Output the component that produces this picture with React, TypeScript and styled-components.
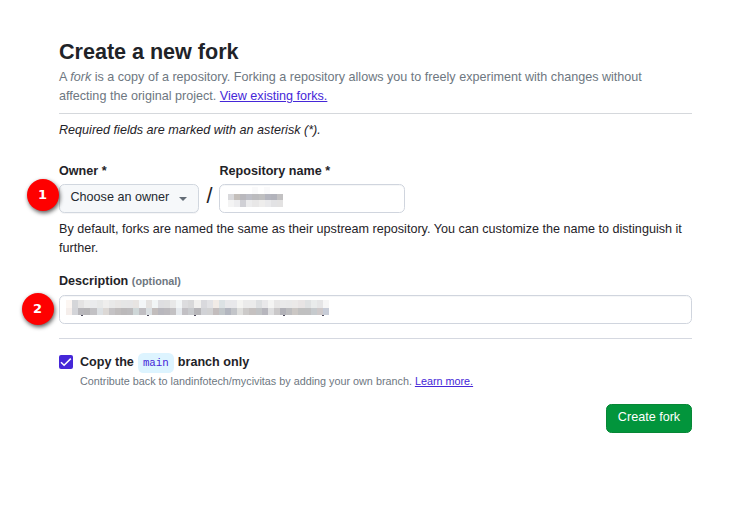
import React from "react";
import styled, { createGlobalStyle } from "styled-components";

const GlobalStyle = createGlobalStyle`
  *, *::before, *::after { box-sizing: border-box; }
  body {
    margin: 0;
    background: #fff;
    color: #1f2328;
    font: 12.6px/19px "Liberation Sans", Arial, sans-serif;
  }
`;

const Page = styled.main`
  width: 633px;
  margin: 36px 0 0 59px;
`;

const Title = styled.h1`
  margin: 0 0 1px;
  font-size: 21.6px;
  line-height: 31px;
  font-weight: 700;
  letter-spacing: -0.03px;
`;

const Lead = styled.p`
  margin: 0;
  padding-bottom: 7px;
  border-bottom: 1px solid #d5d8dc;
  color: #6e7781;
`;

const Link = styled.a`
  color: #4527d8;
  text-decoration: underline;
`;

const Note = styled.p`
  margin: 7px 0 22px;
  font-style: italic;
`;

const NameRow = styled.div`
  display: flex;
  align-items: flex-end;
`;

const Field = styled.div<{ $width?: number }>`
  position: relative;
  display: flex;
  flex-direction: column;
  width: ${(p) => (p.$width ? `${p.$width}px` : "100%")};
`;

const Label = styled.label<{ $inset?: number; $height?: number }>`
  font-weight: 700;
  height: ${(p) => p.$height ?? 22}px;
  padding-left: ${(p) => p.$inset ?? 0}px;
`;

const Optional = styled.span`
  font-size: 10.8px;
  color: #6e7781;
`;

const OwnerButton = styled.button`
  display: flex;
  align-items: center;
  justify-content: space-between;
  height: 29px;
  padding: 0 11px 2px 10.5px;
  border: 1px solid #d1d7df;
  border-radius: 5.4px;
  background: #f6f8fa;
  color: #24292f;
  font: inherit;
  box-shadow: 0 1px 0 rgba(31, 35, 40, 0.04);
`;

const Caret = styled.svg`
  width: 8px;
  height: 4px;
  margin-top: 3px;
  fill: #636c76;
`;

const Slash = styled.span`
  width: 20px;
  height: 29px;
  padding-left: 1px;
  text-align: center;
  font-size: 21.6px;
  line-height: 24px;
`;

const InputBox = styled.div`
  height: 29px;
  border: 1px solid #d0d5de;
  border-radius: 5.4px;
  background: #fff;
  box-shadow: inset 0 1px 0 rgba(208, 215, 222, 0.2);
`;

const Redacted = styled.svg<{ $left: number; $top: number }>`
  display: block;
  margin: ${(p) => `${p.$top}px 0 0 ${p.$left}px`};
`;

const Help = styled.p`
  margin: 7px 0 14px;
`;

const Marker = styled.span<{ $left: number; $top: number }>`
  position: absolute;
  left: ${(p) => p.$left}px;
  top: ${(p) => p.$top}px;
  width: 32px;
  height: 32px;
  border-radius: 50%;
  background: #fe0000;
  color: #fff;
  font: 700 13px/32px "DejaVu Sans", sans-serif;
  text-align: center;
  box-shadow: 1px 2px 4px rgba(0, 0, 0, 0.65);
`;

const Divider = styled.hr`
  margin: 14px 0 0;
  border: 0;
  border-top: 1px solid #d5d8e0;
`;

const BranchOption = styled.div`
  display: grid;
  grid-template-columns: 14px 1fr;
  column-gap: 7px;
  margin-top: 14px;
`;

const CheckBox = styled.span`
  width: 14px;
  height: 14px;
  margin-top: 2px;
  border-radius: 2px;
  background: #4527d8;
`;

const BranchTitle = styled.strong`
  height: 19px;
  line-height: 19px;
`;

const Branch = styled.code`
  display: inline-block;
  height: 20px;
  margin: 0 0.5px;
  padding: 0 5px;
  border-radius: 5.4px;
  background: #ddf4ff;
  color: #4527d8;
  font: 400 10.8px/20px "Liberation Mono", monospace;
  vertical-align: top;
`;

const BranchHelp = styled.span`
  grid-column: 2;
  color: #6e7781;
  font-size: 10.8px;
  line-height: 18px;
`;

const Actions = styled.div`
  display: flex;
  justify-content: flex-end;
  margin-top: 14px;
`;

const Submit = styled.button`
  width: 86px;
  height: 29px;
  padding: 0 0 2px;
  border: 1px solid #078736;
  border-radius: 5.4px;
  background: #02953c;
  color: #fff;
  font: inherit;
`;

const nameRows = [
  "d9d9dc c4bfbb b9b8bd bdbec6 bbbbbe bfbfc0 b4b5be b2b3bb c2c1c2".split(" "),
  "f4f4f4 ededef d0d0d5 ececed e8e7e7 eeedec e9e9eb e2e2e4 e3e2e2".split(" "),
];

const descriptionRows = [
  "fcf6f2 d5d6d9 e4e3e3 ececec eaebed e7e8e8 efeeed e9e9e9 e8e6e5 e5e6e6 e5e5e6 e7e4e2 f3f6f8 e4e2e1 f1f5f6 dedee1 dfdfe0 e8e8e8 f2f5f6 dcdcde d8d8d9 f1f0ee d9d9dd e2e2e5 f1ebe6 dce2e4 e8e8ea e8e8eb f4f4f2 ebebeb ebebeb dddfe1 e9e8ea f4f4f3 e7e6e6 eaeaea e9e9e9 ebe9e8 e8e4e4 dfe1e2 e9ebeb e5e5e6 f6f6f6".split(" "),
  "f5eeeb d3d4d8 b8b7bb b7b6b8 c2c1c4 dce0e3 dcd8d5 c5c3c5 c0bdbd bbb9ba bcbbbd cfd7d8 c0bec2 d9dee1 c2bdbc b8b7bd bbb9bd c3c1c3 e5e9ed c2c0c4 c8cacd b7b6b9 d1d2d6 d2d2d3 c3bdbd c1c6c9 b3b6bf c3c5c9 dfdfdd cccac9 c5c1c0 c1c3c5 b7b6bd dededf cac8c9 b2b2b8 bdbdbf cbc7c4 c0c0c0 c0c0c1 c6cacd cec9ca c7ccd7".split(" "),
];

function Mosaic({ rows, width, left, top, split, height, tails = [], hints = [] }: {
  rows: string[][];
  width: number;
  left: number;
  top: number;
  split: number;
  height: number;
  tails?: number[];
  hints?: number[];
}) {
  const cell = width / rows[0].length;
  const lift = hints.length ? 7 : 0;
  return (
    <Redacted
      $left={left}
      $top={top - lift}
      width={width}
      height={height + lift + 1}
      shapeRendering="crispEdges"
      aria-hidden="true"
    >
      {hints.map((x) => (
        <rect key={x} x={x} y={0} width={6} height={7} fill="#fafafb" />
      ))}
      {rows.map((row, r) =>
        row.map((color, i) => (
          <rect
            key={`${r}-${i}`}
            x={i * cell}
            y={lift + (r ? split : 0)}
            width={cell}
            height={r ? height - split : split}
            fill={`#${color}`}
          />
        ))
      )}
      {tails.map((x) => (
        <rect key={x} x={x} y={height} width={2} height={1} fill="#4e4b5c" />
      ))}
    </Redacted>
  );
}

export default function App() {
  return (
    <>
      <GlobalStyle />
      <Page>
        <Title>Create a new fork</Title>
        <Lead>
          A <em>fork</em> is a copy of a repository. Forking a repository allows you to freely experiment with changes without affecting the original project. <Link>View existing forks.</Link>
        </Lead>
        <Note>Required fields are marked with an asterisk (*).</Note>

        <NameRow>
          <Field $width={140}>
            <Label>Owner *</Label>
            <OwnerButton>
              Choose an owner
              <Caret viewBox="0 0 8 4"><path d="M0 0h8L4 4z" /></Caret>
            </OwnerButton>
            <Marker $left={-32.5} $top={17.4}>1</Marker>
          </Field>
          <Slash>/</Slash>
          <Field $width={186}>
            <Label $inset={0.5}>Repository name *</Label>
            <InputBox>
              <Mosaic rows={nameRows} width={55} left={8} top={9} split={6} height={13} hints={[24, 36]} />
            </InputBox>
          </Field>
        </NameRow>
        <Help>
          By default, forks are named the same as their upstream repository. You can customize the name to distinguish it further.
        </Help>

        <Field>
          <Label $height={23}>Description <Optional>(optional)</Optional></Label>
          <InputBox>
            <Mosaic rows={descriptionRows} width={263} left={6} top={4} split={8} height={15} tails={[15, 81, 128, 217, 256]} />
          </InputBox>
          <Marker $left={-37.5} $top={21.4}>2</Marker>
        </Field>
        <Divider />

        <BranchOption>
          <CheckBox role="checkbox" aria-checked="true">
            <svg width="14" height="14" viewBox="0 0 14 14" display="block">
              <path d="M2 7.3 5.1 10.3 11.8 3.6" fill="none" stroke="#fff" strokeWidth="1.5" />
            </svg>
          </CheckBox>
          <BranchTitle>Copy the <Branch>main</Branch> branch only</BranchTitle>
          <BranchHelp>
            Contribute back to landinfotech/mycivitas by adding your own branch. <Link>Learn more.</Link>
          </BranchHelp>
        </BranchOption>
        <Actions>
          <Submit>Create fork</Submit>
        </Actions>
      </Page>
    </>
  );
}
